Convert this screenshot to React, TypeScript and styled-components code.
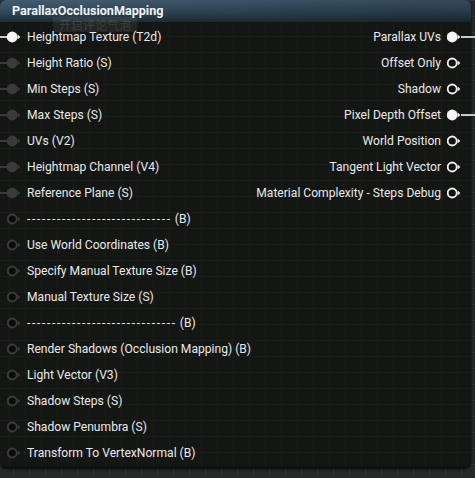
import React from "react";
import styled, { createGlobalStyle } from "styled-components";

const Global = createGlobalStyle`
  html, body { margin: 0; padding: 0; background: #272727; }
  body { font-family: Roboto, "Noto Sans", "Liberation Sans", sans-serif; }
`;

const Canvas = styled.div`
  width: 475px;
  height: 478px;
  overflow: hidden;
  background-color: #272828;
  background-image:
    linear-gradient(to right, #323333 1px, transparent 1px),
    linear-gradient(to bottom, #323333 1px, transparent 1px);
  background-size: 16px 16px;
  background-position: 13px 0;
`;

const Node = styled.div`
  position: relative;
  width: 471px;
  border-radius: 6px;
  background-color: #141613;
  background-image:
    linear-gradient(to right, #1a1c19 1px, transparent 1px),
    linear-gradient(to bottom, #1a1c19 1px, transparent 1px);
  background-size: 16px 16px;
  background-position: 9px 4px;
  box-shadow: 0 2px 3px rgba(0, 0, 0, 0.85);
`;

const Header = styled.div`
  height: 22px;
  display: flex;
  align-items: center;
  padding-left: 12px;
  border-radius: 6px 6px 0 0;
  background:
    linear-gradient(to right, rgba(0, 0, 0, 0) 0%, rgba(0, 0, 0, 0.22) 100%),
    linear-gradient(to bottom, #425d70 0%, #30485a 55%, #1f2d37 100%);
  color: #f1f3f4;
  font-weight: 700;
  font-size: 12.6px;
  line-height: 14px;
`;

const Bubble = styled.div`
  position: absolute;
  left: 53px;
  top: 17px;
  width: 84px;
  height: 15px;
  display: flex;
  align-items: center;
  justify-content: center;
  background: rgba(150, 150, 150, 0.12);
  color: rgba(200, 200, 200, 0.17);
  font-family: "Noto Sans CJK SC", sans-serif;
  font-size: 12px;
  line-height: 12px;
  pointer-events: none;
`;

const Body = styled.div`
  display: grid;
  grid-template-columns: 1fr auto;
  padding: 2px 10px 1px 7px;
`;

const Column = styled.div`
  display: flex;
  flex-direction: column;
`;

const Row = styled.div<{ $out?: boolean; $wire?: string }>`
  position: relative;
  height: 26px;
  display: flex;
  align-items: center;
  gap: 6px;
  justify-content: ${(p) => (p.$out ? "flex-end" : "flex-start")};
  color: #e9e9e9;
  font-size: 12.1px;
  white-space: nowrap;

  &::before {
    content: "";
    display: ${(p) => (p.$wire ? "block" : "none")};
    position: absolute;
    top: 12px;
    height: 1.5px;
    width: ${(p) => (p.$out ? "14px" : "7px")};
    ${(p) => (p.$out ? "right: -14px;" : "left: -7px;")}
    background: ${(p) => p.$wire || "transparent"};
  }
`;

const Label = styled.span`
  line-height: 14px;
`;

const Dashes = styled.span`
  letter-spacing: 1.65px;
`;

type PinKind = "lit" | "dim" | "hollow" | "outHollow";

const pinColors: Record<PinKind, { fill: string; stroke: string; tri: string; sw: number }> = {
  lit: { fill: "#f4f4f4", stroke: "#f4f4f4", tri: "#f4f4f4", sw: 0 },
  dim: { fill: "#3b3b3b", stroke: "#3b3b3b", tri: "#3b3b3b", sw: 0 },
  hollow: { fill: "#0b0b0b", stroke: "#3c3c3c", tri: "#3c3c3c", sw: 1.9 },
  outHollow: { fill: "#111", stroke: "#f0f0f0", tri: "#f0f0f0", sw: 1.8 },
};

const Pin: React.FC<{ kind: PinKind }> = ({ kind }) => {
  const c = pinColors[kind];
  const r = c.sw ? 5.4 - c.sw / 2 : 5.4;
  return (
    <svg width="14" height="12" viewBox="0 0 14 12" style={{ flex: "none" }}>
      <circle cx="5.2" cy="6" r={r} fill={c.fill} stroke={c.stroke} strokeWidth={c.sw} />
      <polygon points="10.6,3.6 13.4,6 10.6,8.4" fill={c.tri} />
    </svg>
  );
};

type InputDef = { label: string; kind: PinKind; wire?: string; dashes?: number };

const inputs: InputDef[] = [
  { label: "Heightmap Texture (T2d)", kind: "lit", wire: "#c8c8c8" },
  { label: "Height Ratio (S)", kind: "dim", wire: "#3a3a3a" },
  { label: "Min Steps (S)", kind: "dim", wire: "#3a3a3a" },
  { label: "Max Steps (S)", kind: "dim", wire: "#3a3a3a" },
  { label: "UVs (V2)", kind: "dim", wire: "#3a3a3a" },
  { label: "Heightmap Channel (V4)", kind: "dim", wire: "#3a3a3a" },
  { label: "Reference Plane (S)", kind: "dim", wire: "#3a3a3a" },
  { label: "(B)", kind: "hollow", dashes: 29 },
  { label: "Use World Coordinates (B)", kind: "hollow" },
  { label: "Specify Manual Texture Size (B)", kind: "hollow" },
  { label: "Manual Texture Size (S)", kind: "hollow" },
  { label: "(B)", kind: "hollow", dashes: 30 },
  { label: "Render Shadows (Occlusion Mapping) (B)", kind: "hollow" },
  { label: "Light Vector (V3)", kind: "hollow" },
  { label: "Shadow Steps (S)", kind: "hollow" },
  { label: "Shadow Penumbra (S)", kind: "hollow" },
  { label: "Transform To VertexNormal (B)", kind: "hollow" },
];

type OutputDef = { label: string; linked?: boolean };

const outputs: OutputDef[] = [
  { label: "Parallax UVs", linked: true },
  { label: "Offset Only" },
  { label: "Shadow" },
  { label: "Pixel Depth Offset", linked: true },
  { label: "World Position" },
  { label: "Tangent Light Vector" },
  { label: "Material Complexity - Steps Debug" },
];

export default function App() {
  return (
    <>
      <Global />
      <Canvas>
        <Node>
          <Header>ParallaxOcclusionMapping</Header>
          <Bubble>开启评论气泡</Bubble>
          <Body>
            <Column>
              {inputs.map((i, n) => (
                <Row key={n} $wire={i.wire}>
                  <Pin kind={i.kind} />
                  <Label>
                    {i.dashes ? <Dashes>{"-".repeat(i.dashes)}</Dashes> : null}
                    {i.dashes ? " " : null}
                    {i.label}
                  </Label>
                </Row>
              ))}
            </Column>
            <Column>
              {outputs.map((o, n) => (
                <Row key={n} $out $wire={o.linked ? "#c8c8c8" : undefined}>
                  <Label>{o.label}</Label>
                  <Pin kind={o.linked ? "lit" : "outHollow"} />
                </Row>
              ))}
            </Column>
          </Body>
        </Node>
      </Canvas>
    </>
  );
}
